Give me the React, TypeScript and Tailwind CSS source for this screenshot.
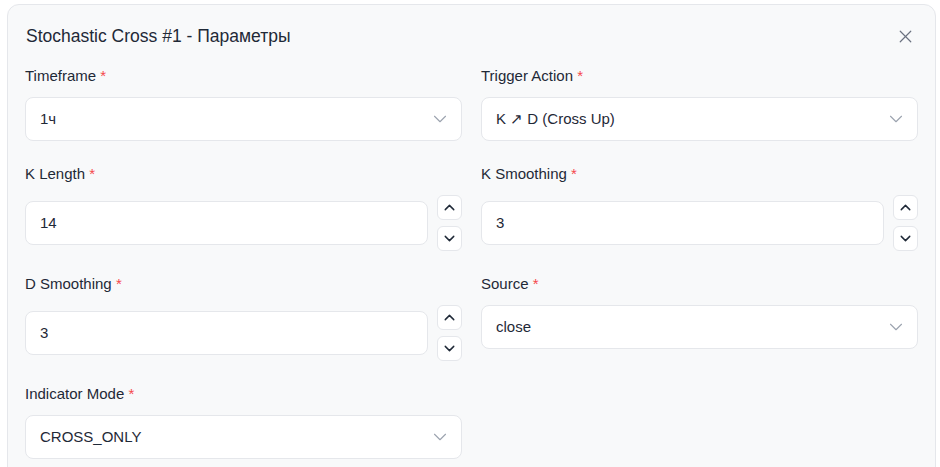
import { ChevronDown, ChevronUp, X } from 'lucide-react'

type Field = {
  label: string
  kind: 'select' | 'number'
  value: string
}

const rows: [Field, Field | null][] = [
  [
    { label: 'Timeframe', kind: 'select', value: '1ч' },
    { label: 'Trigger Action', kind: 'select', value: 'K ↗ D (Cross Up)' },
  ],
  [
    { label: 'K Length', kind: 'number', value: '14' },
    { label: 'K Smoothing', kind: 'number', value: '3' },
  ],
  [
    { label: 'D Smoothing', kind: 'number', value: '3' },
    { label: 'Source', kind: 'select', value: 'close' },
  ],
  [{ label: 'Indicator Mode', kind: 'select', value: 'CROSS_ONLY' }, null],
]

function SelectBox({ value }: { value: string }) {
  return (
    <div className="h-[44px] flex items-center justify-between border border-[#e5e7eb] bg-white rounded-[8px] pl-[14px] pr-[10px] text-[15px] text-[#1f2937]">
      <span>{value}</span>
      <ChevronDown size={22} strokeWidth={1.2} className="text-[#9ca3af]" />
    </div>
  )
}

function NumberBox({ value }: { value: string }) {
  return (
    <div className="flex items-center gap-[9px]">
      <div className="flex-1 h-[44px] flex items-center border border-[#e5e7eb] bg-white rounded-[8px] px-[14px] text-[15px] text-[#1f2937]">
        {value}
      </div>
      <div className="flex flex-col gap-[6px]">
        <button
          type="button"
          className="w-[25px] h-[25px] flex items-center justify-center border border-[#e5e7eb] bg-white rounded-[6px] text-[#1f2937]"
        >
          <ChevronUp size={17} strokeWidth={2} />
        </button>
        <button
          type="button"
          className="w-[25px] h-[25px] flex items-center justify-center border border-[#e5e7eb] bg-white rounded-[6px] text-[#1f2937]"
        >
          <ChevronDown size={17} strokeWidth={2} />
        </button>
      </div>
    </div>
  )
}

function FormField({ field }: { field: Field }) {
  return (
    <div className="flex flex-col">
      <label className="h-[20px] leading-[20px] text-[15px] text-[#1f2937] mb-[12px] pt-[1px]">
        {field.label} <span className="text-[#f5484b]">*</span>
      </label>
      {field.kind === 'select' ? <SelectBox value={field.value} /> : <NumberBox value={field.value} />}
    </div>
  )
}

export default function App() {
  return (
    <div className="w-[940px] h-[467px] bg-white overflow-hidden pt-[4px] pl-[7px] font-['Liberation_Sans',Arial,sans-serif]">
      <div className="w-[929px] h-[500px] bg-[#f8f9fa] border border-[#e5e7eb] rounded-[12px] px-[17px] pt-[19px]">
        <div className="flex items-center justify-between h-[24px] mb-[17px]">
          <h2 className="text-[17.5px] text-[#1f2937] pl-[1px]">Stochastic Cross #1 - Параметры</h2>
          <X size={21} strokeWidth={1.4} className="text-[#6b7280] mr-[2px]" />
        </div>
        <div className="flex flex-col gap-[22px]">
          {rows.map(([a, b], i) => (
            <div key={i} className="grid grid-cols-2 gap-x-[19px] items-start">
              <FormField field={a} />
              {b ? <FormField field={b} /> : <div />}
            </div>
          ))}
        </div>
      </div>
    </div>
  )
}
